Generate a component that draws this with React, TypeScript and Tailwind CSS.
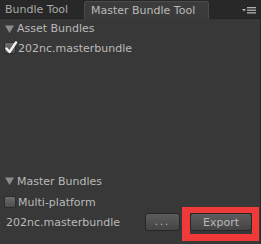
import React from "react";

const Fold = () => (
  <svg width="9" height="8" viewBox="0 0 9 8" className="shrink-0">
    <polygon points="0,0.5 9,0.5 4.5,8" fill="#8c8c8c" />
  </svg>
);

const Check = ({ checked }: { checked?: boolean }) => (
  <div className="relative w-[12px] h-[12px] shrink-0 rounded-[2px] border border-[#2c2c2c] bg-gradient-to-b from-[#6c6c6c] to-[#4c4c4c]">
    {checked && (
      <svg width="14" height="13" viewBox="0 0 14 13" className="absolute left-[-1px] top-[-2px]">
        <path d="M2.5 7.5 L5.5 11 L12 1.5" stroke="#f4f4f4" strokeWidth="2.4" fill="none" strokeLinecap="round" strokeLinejoin="round" />
      </svg>
    )}
  </div>
);

const Btn = ({ children, className }: { children: React.ReactNode; className?: string }) => (
  <div
    className={
      "h-[18px] flex items-center justify-center rounded-[3px] border border-[#262626] bg-gradient-to-b from-[#5c5c5c] to-[#444444] text-[#b8b8b8] " +
      (className ?? "")
    }
  >
    {children}
  </div>
);

export default function App() {
  return (
    <div
      className="w-[261px] h-[244px] flex flex-col bg-[#383838] text-[#bababa] text-[11px] leading-none overflow-hidden border-r border-[#2a2a2a]"
      style={{ fontFamily: '"DejaVu Sans", sans-serif' }}
    >
      {/* tab strip */}
      <div className="h-[19px] shrink-0 flex items-end bg-[#282828] border-b border-[#232323]">
        <div className="w-[84px] h-[17px] flex items-center pl-[5px] text-[#a8a8a8]">Bundle Tool</div>
        <div className="w-[125px] h-[18px] -mb-px flex items-center pl-[6px] rounded-t-[3px] border border-b-0 border-[#4a4a4a] bg-[#3b3b3b] text-[#bababa]">
          Master Bundle Tool
        </div>
        <div className="flex-1 h-full flex items-center justify-end pr-[4px] pt-[2px]">
          <svg width="14" height="7" viewBox="0 0 14 7">
            <polygon points="0,2 4,2 2,4.5" fill="#b0b0b0" />
            <rect x="5" y="0" width="9" height="1.3" fill="#b0b0b0" />
            <rect x="5" y="2.6" width="9" height="1.3" fill="#b0b0b0" />
            <rect x="5" y="5.2" width="9" height="1.3" fill="#b0b0b0" />
          </svg>
        </div>
      </div>

      {/* asset bundles */}
      <div className="h-[18px] flex items-center gap-[3px] pl-[5px] pt-px">
        <Fold />
        <span>Asset Bundles</span>
      </div>
      <div className="mt-[2px] h-[18px] flex items-center gap-[2px] pl-[4px]">
        <Check checked />
        <span>202nc.masterbundle</span>
      </div>

      <div className="flex-1" />

      {/* master bundles */}
      <div className="h-[18px] flex items-center gap-[3px] pl-[5px]">
        <Fold />
        <span>Master Bundles</span>
      </div>
      <div className="mt-[3px] h-[18px] flex items-center gap-[2px] pl-[4px]">
        <Check />
        <span>Multi-platform</span>
      </div>
      <div className="mt-[2px] mb-[13px] h-[18px] flex items-center pl-[6px]">
        <span className="flex-1">202nc.masterbundle</span>
        <Btn className="w-[35px] items-end pb-[3px] text-[10px] tracking-[2px]">...</Btn>
        <div className="relative ml-[10px] mr-[8px]">
          <Btn className="w-[62px] pt-px">Export</Btn>
          <div className="absolute left-[-8px] top-[-6px] right-[-7px] bottom-[-10px] border-[#f03a3a] border-l-[8px] border-t-[6px] border-r-[7px] border-b-[7px]" />
        </div>
      </div>
    </div>
  );
}
